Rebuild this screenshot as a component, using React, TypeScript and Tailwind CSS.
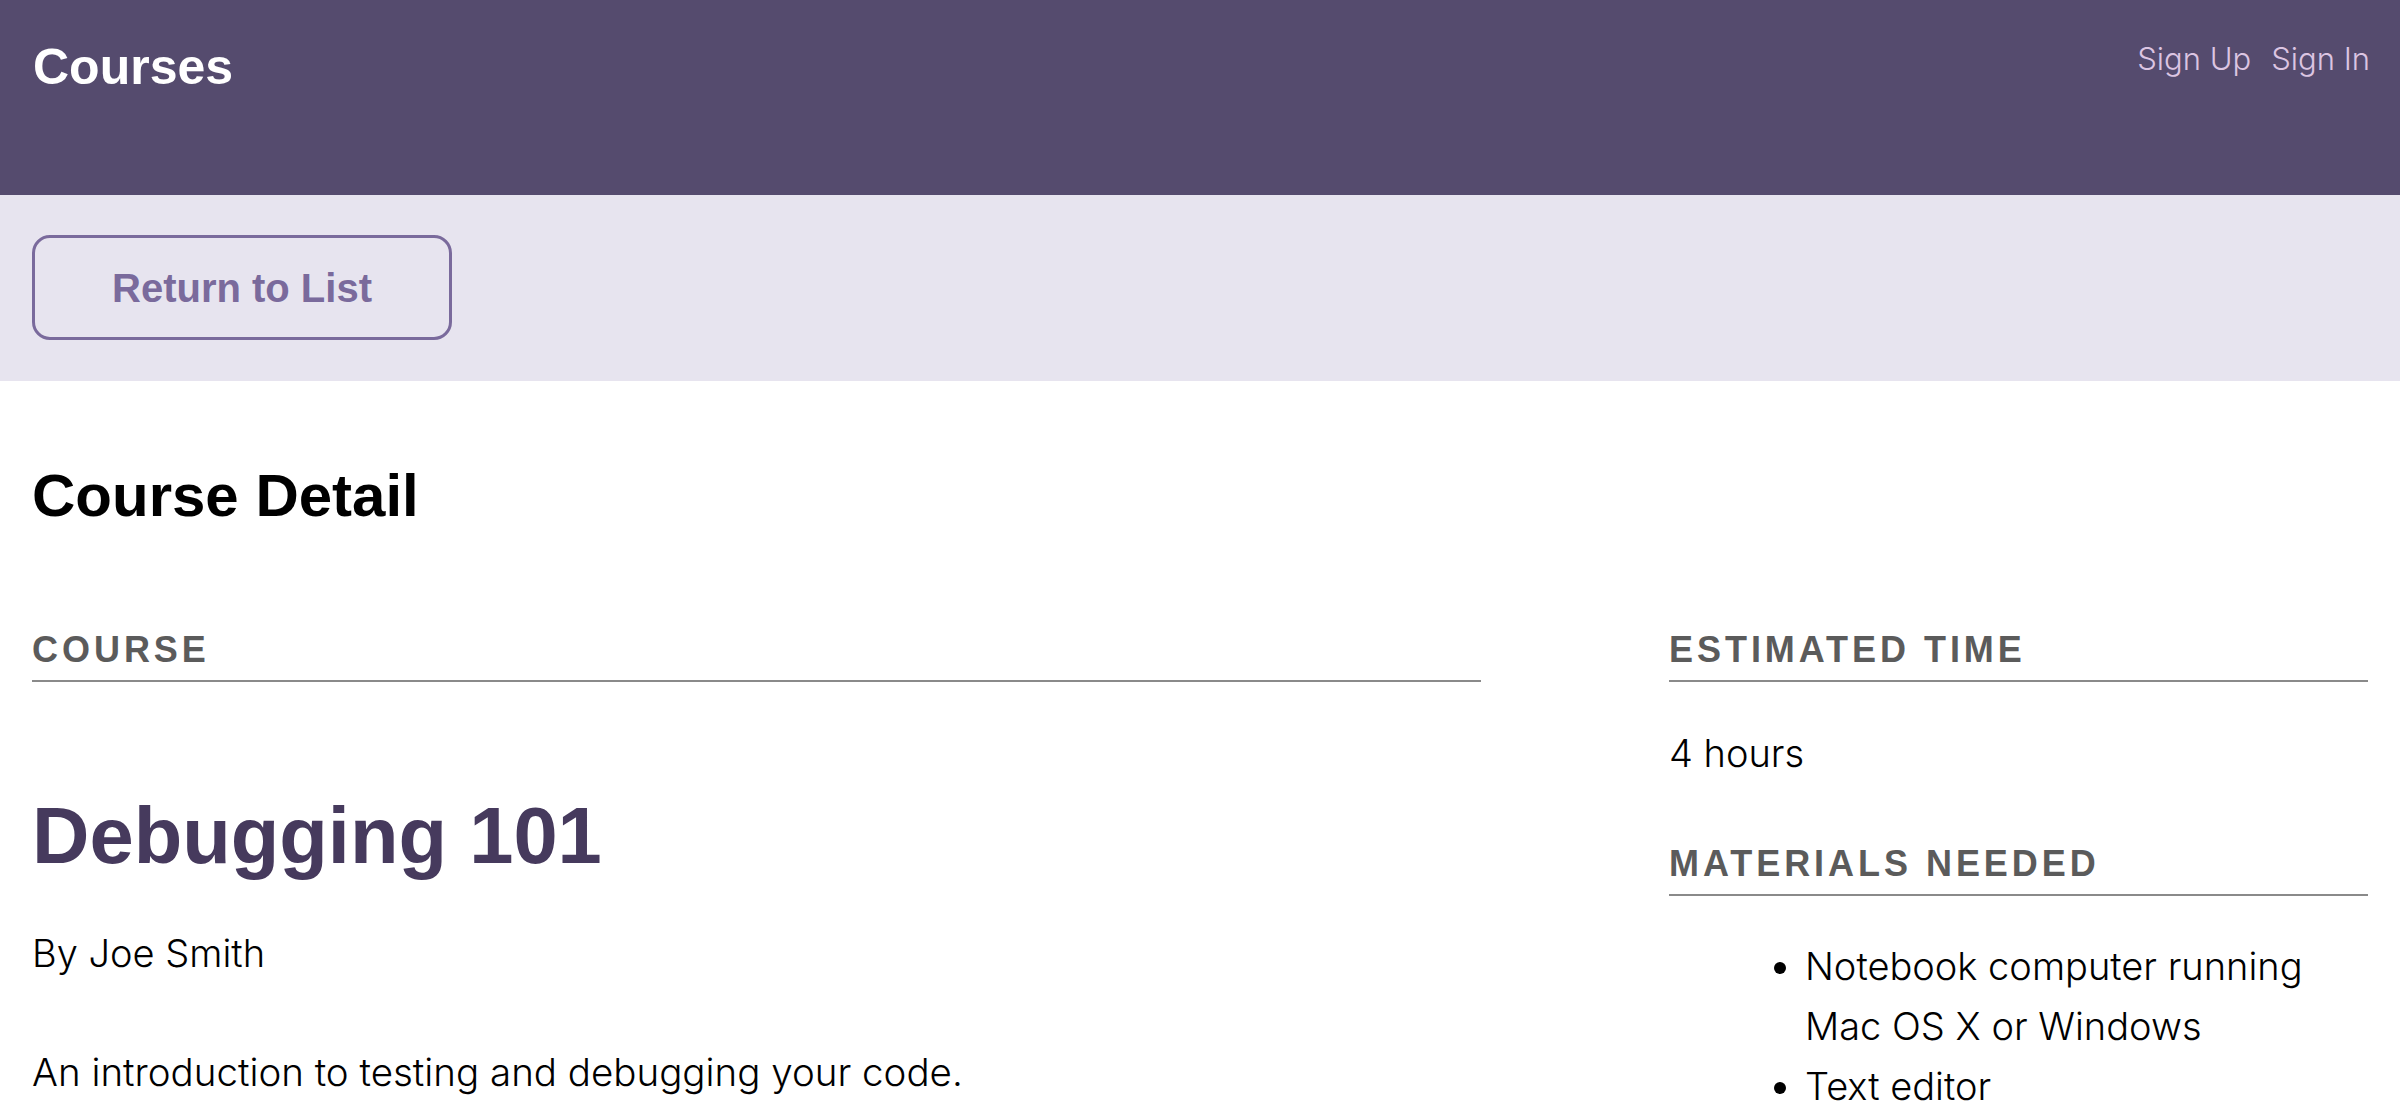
const heading = "font-['Liberation_Sans','Helvetica_Neue',Arial,sans-serif]";
const body = "font-['Inter','Helvetica_Neue',sans-serif] font-light";

const SectionLabel = ({ children }: { children: React.ReactNode }) => (
  <h3
    className={`${heading} border-b-2 border-[#8a8a8a] pb-[12px] text-[36px] font-bold uppercase leading-none tracking-[0.11em] text-[#5b5b5b]`}
  >
    {children}
  </h3>
);

export default function App() {
  return (
    <div className="min-h-screen bg-white text-black">
      <header className="flex h-[195px] items-start justify-between bg-[#554b6e] pl-[32px] pr-[30px] pt-[42px]">
        <h1 className={`${heading} pl-[1px] text-[50px] font-bold leading-none text-white`}>Courses</h1>
        <nav className={`${body} mt-[1px] flex gap-[20px] text-[31px] leading-none text-[#dcc5e2]`}>
          <a href="#">Sign Up</a>
          <a href="#">Sign In</a>
        </nav>
      </header>

      <div className="h-[186px] bg-[#e7e4ef] px-[32px] pt-[40px]">
        <button
          className={`${heading} h-[105px] w-[420px] rounded-[18px] border-[3px] border-[#7a6a9c] text-[40px] font-bold text-[#7a6a9c]`}
        >
          Return to List
        </button>
      </div>

      <main className="px-[32px]">
        <h2 className={`${heading} mt-[85px] text-[60px] font-bold leading-none`}>Course Detail</h2>

        <div className="mt-[106px] flex gap-[188px]">
          <div className="flex-1">
            <SectionLabel>Course</SectionLabel>
            <h4 className={`${heading} mt-[114px] text-[79.5px] font-bold leading-none text-[#463a5d]`}>
              Debugging 101
            </h4>
            <p className={`${body} mt-[58px] text-[38px] leading-none`}>By Joe Smith</p>
            <p className={`${body} mt-[81px] text-[38.5px] leading-none`}>
              An introduction to testing and debugging your code.
            </p>
          </div>

          <div className="w-[699px]">
            <SectionLabel>Estimated Time</SectionLabel>
            <p className={`${body} mt-[52px] text-[38px] leading-none`}>4 hours</p>
            <div className="mt-[74px]">
              <SectionLabel>Materials Needed</SectionLabel>
            </div>
            <ul className={`${body} mt-[40px] list-disc pl-[136px] text-[38px] leading-[60px]`}>
              <li>Notebook computer running Mac OS X or Windows</li>
              <li>Text editor</li>
            </ul>
          </div>
        </div>
      </main>
    </div>
  );
}
